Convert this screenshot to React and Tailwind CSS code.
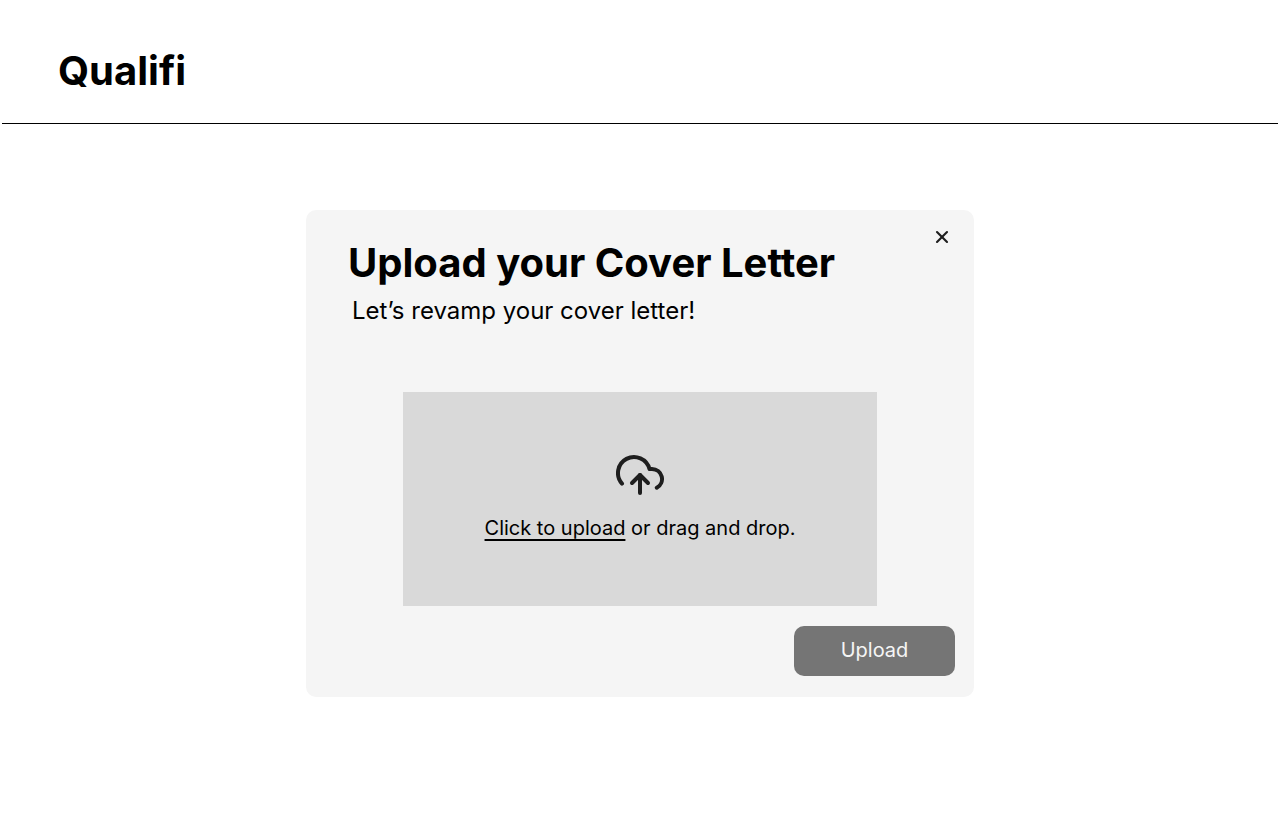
import React, { useState } from 'react';
import { X } from 'lucide-react';

const CloudUploadIcon = () => (
  <svg
    className="w-12 h-12"
    viewBox="0 0 24 24"
    fill="none"
    stroke="currentColor"
    strokeWidth="2"
    strokeLinecap="round"
    strokeLinejoin="round"
    aria-hidden="true"
  >
    <path d="M16 16l-4-4-4 4" />
    <path d="M12 12v9" />
    <path d="M20.39 18.39A5 5 0 0 0 18 9h-1.26A8 8 0 1 0 3 16.3" />
  </svg>
);

const App = () => {
  const [file, setFile] = useState(null);
  const [open, setOpen] = useState(true);

  const handleDrop = (e) => {
    e.preventDefault();
    setFile(e.dataTransfer.files[0]);
  };

  return (
    <div className="min-h-screen bg-white text-black font-[Inter,sans-serif]">
      {/* Header */}
      <header className="mx-0.5 px-14 pt-[47px] pb-7 border-b border-black">
        <h1 className="text-[40px] leading-[48px] font-bold">Qualifi</h1>
      </header>

      {/* Upload panel */}
      {open && (
        <main className="px-6 pt-[86px] pb-16">
          <section className="relative max-w-[668px] mx-auto pt-[29px] pb-[21px] bg-neutral-100 rounded-[10px]">
            <button
              type="button"
              aria-label="Close"
              onClick={() => setOpen(false)}
              className="absolute top-[17px] right-[22px] text-[#1e1e1e] cursor-pointer"
            >
              <X size={20} strokeWidth={2.5} />
            </button>

            <div className="px-[42px]">
              <h2 className="text-[40px] leading-[48px] font-bold">Upload your Cover Letter</h2>
              <p className="mt-2 pl-1 text-2xl">Let’s revamp your cover letter!</p>
            </div>

            <label
              htmlFor="cover-letter"
              onDragOver={(e) => e.preventDefault()}
              onDrop={handleDrop}
              className="relative flex flex-col items-center justify-center gap-4 max-w-[474px] min-h-[214px] mt-[65px] mx-auto pb-1.5 bg-[#d9d9d9] cursor-pointer"
            >
              <span className="text-[#1e1e1e]">
                <CloudUploadIcon />
              </span>
              <span className="text-xl leading-[26px]">
                {file ? file.name : <><span className="underline underline-offset-4">Click to upload</span> or drag and drop.</>}
              </span>
              <input
                id="cover-letter"
                type="file"
                className="sr-only"
                onChange={(e) => setFile(e.target.files[0])}
              />
            </label>

            <div className="flex justify-end mt-5 pr-[19px]">
              <button
                type="button"
                className="min-w-[161px] px-4 pt-3 pb-3.5 text-xl leading-6 bg-[#757575] text-neutral-100 rounded-[10px] cursor-pointer"
              >
                Upload
              </button>
            </div>
          </section>
        </main>
      )}
    </div>
  );
};

export default App;
